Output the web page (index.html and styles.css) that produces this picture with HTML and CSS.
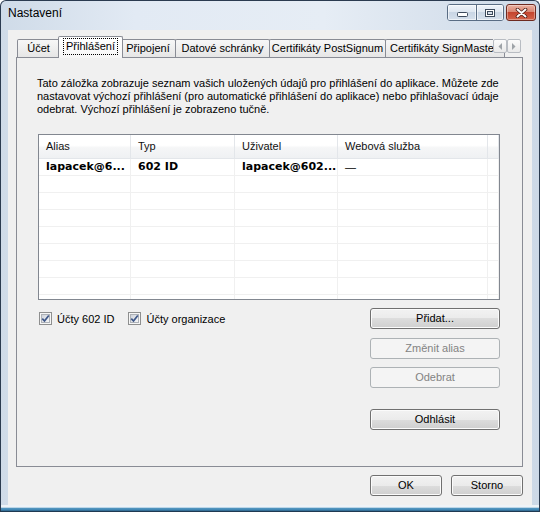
FILE: index.html
```html
<!DOCTYPE html>
<html lang="cs">
<head>
<meta charset="utf-8">
<title>Nastavení</title>
<link rel="stylesheet" href="styles.css">
</head>
<body>
<div class="window">
  <div class="titlebar">
    <span class="title">Nastavení</span>
    <div class="caps">
      <div class="cap-group">
        <div class="cap cap-min">
          <svg width="11" height="5" viewBox="0 0 11 5"><rect x="0.5" y="0.5" width="10" height="4" rx="1" fill="#fff" stroke="#3c4a5c"/></svg>
        </div>
        <div class="cap cap-max">
          <svg width="10" height="8" viewBox="0 0 10 8"><rect x="0.5" y="0.5" width="9" height="7" fill="#fff" stroke="#3c4a5c"/><rect x="2.5" y="2.5" width="5" height="3" fill="#d4dde8" stroke="#3c4a5c"/></svg>
        </div>
      </div>
      <div class="cap-close">
        <svg width="13" height="10" viewBox="0 0 13 10"><path d="M2.5 1.5 L10.5 8.5 M10.5 1.5 L2.5 8.5" stroke="#4a1a12" stroke-width="3.6" stroke-linecap="round"/><path d="M2.5 1.5 L10.5 8.5 M10.5 1.5 L2.5 8.5" stroke="#fff" stroke-width="2" stroke-linecap="round"/></svg>
      </div>
    </div>
  </div>

  <div class="client">
    <div class="tabs">
      <div class="tab t-ucet">Účet</div>
      <div class="tab t-prihl selected"><span class="focus">Přihlášení</span></div>
      <div class="tab t-pripo">Připojení</div>
      <div class="tab t-dat">Datové schránky</div>
      <div class="tab t-post">Certifikáty PostSignum</div>
      <div class="tab t-sign">Certifikáty SignMaster</div>
      <div class="tab-scroll">
        <div class="ts-btn"><svg width="4" height="7" viewBox="0 0 4 7"><path d="M4 0 L0.5 3.5 L4 7 Z" fill="#9ea3a8"/></svg></div>
        <div class="ts-btn"><svg width="4" height="7" viewBox="0 0 4 7"><path d="M0 0 L3.5 3.5 L0 7 Z" fill="#9ea3a8"/></svg></div>
      </div>
    </div>

    <div class="panel">
      <p class="desc">Tato záložka zobrazuje seznam vašich uložených údajů pro přihlášení do aplikace. Můžete zde<br>nastavovat výchozí přihlášení (pro automatické přihlášení do aplikace) nebo přihlašovací údaje<br>odebrat. Výchozí přihlášení je zobrazeno tučně.</p>

      <div class="list">
        <div class="lv-head">
          <div class="hc">Alias</div>
          <div class="hc">Typ</div>
          <div class="hc">Uživatel</div>
          <div class="hc">Webová služba</div>
          <div class="hc"></div>
        </div>
        <div class="lv-body">
          <div class="row bold"><div class="c">lapacek@6...</div><div class="c">602 ID</div><div class="c">lapacek@602...</div><div class="c dash">—</div><div class="c"></div></div>
          <div class="row"><div class="c"></div><div class="c"></div><div class="c"></div><div class="c"></div><div class="c"></div></div>
          <div class="row"><div class="c"></div><div class="c"></div><div class="c"></div><div class="c"></div><div class="c"></div></div>
          <div class="row"><div class="c"></div><div class="c"></div><div class="c"></div><div class="c"></div><div class="c"></div></div>
          <div class="row"><div class="c"></div><div class="c"></div><div class="c"></div><div class="c"></div><div class="c"></div></div>
          <div class="row"><div class="c"></div><div class="c"></div><div class="c"></div><div class="c"></div><div class="c"></div></div>
          <div class="row"><div class="c"></div><div class="c"></div><div class="c"></div><div class="c"></div><div class="c"></div></div>
          <div class="row"><div class="c"></div><div class="c"></div><div class="c"></div><div class="c"></div><div class="c"></div></div>
          <div class="row"><div class="c"></div><div class="c"></div><div class="c"></div><div class="c"></div><div class="c"></div></div>
        </div>
      </div>

      <div class="lower">
        <div class="checks">
          <label class="check">
            <span class="cb"><span class="cb-in"></span><svg class="tick" width="9" height="9" viewBox="0 0 9 9"><path d="M1.3 4.6 L3.5 7 L7.8 1.4" fill="none" stroke="#3d5688" stroke-width="1.7"/></svg></span>
            <span>Účty 602 ID</span>
          </label>
          <label class="check">
            <span class="cb"><span class="cb-in"></span><svg class="tick" width="9" height="9" viewBox="0 0 9 9"><path d="M1.3 4.6 L3.5 7 L7.8 1.4" fill="none" stroke="#3d5688" stroke-width="1.7"/></svg></span>
            <span>Účty organizace</span>
          </label>
        </div>
        <div class="btn-col">
          <button class="btn">Přidat...</button>
          <button class="btn b-alias" disabled>Změnit alias</button>
          <button class="btn b-odebrat" disabled>Odebrat</button>
          <button class="btn b-odhlasit">Odhlásit</button>
        </div>
      </div>
    </div>

    <div class="dlg-buttons">
      <button class="btn sm">OK</button>
      <button class="btn sm">Storno</button>
    </div>
  </div>
  <div class="bottom-edge"></div>
</div>
</body>
</html>
```

FILE: styles.css
```css
* { box-sizing: border-box; }

html, body {
  margin: 0;
  padding: 0;
}

body {
  width: 540px;
  height: 512px;
  overflow: hidden;
  font-family: "Liberation Sans", Arial, sans-serif;
  font-size: 11px;
  color: #000;
  background: #fff;
}

.window {
  width: 540px;
  height: 512px;
  display: flex;
  flex-direction: column;
  border: 1px solid #2b3b50;
  border-bottom-color: #1f3a52;
  border-radius: 6px 6px 0 0;
  background: linear-gradient(to right, #cfdbe8 0%, #e2eaf4 25%, #e6edf5 60%, #cdd9e7 100%);
  padding: 0 7px 0 7px;
}

.titlebar {
  height: 29px;
  display: flex;
  align-items: flex-start;
  flex: none;
}

.title {
  padding-top: 5px;
  font-size: 12px;
  line-height: 14px;
  color: #000;
}

.caps {
  margin-left: auto;
  margin-top: 3px;
  margin-right: -4px;
  display: flex;
  gap: 2px;
}

.cap-group {
  display: flex;
  height: 17px;
  border: 1px solid #5a6d84;
  border-radius: 3px;
  overflow: hidden;
}

.cap {
  width: 28px;
  height: 15px;
  display: flex;
  align-items: center;
  justify-content: center;
  background: linear-gradient(#eef3f9 0%, #dfe7f1 45%, #c9d6e5 50%, #d6e0ec 100%);
  box-shadow: inset 0 0 0 1px rgba(255,255,255,0.6);
}

.cap + .cap {
  width: 27px;
  border-left: 1px solid #5a6d84;
}

.cap-min {
  align-items: flex-end;
  padding-bottom: 3px;
}

.cap-close {
  width: 30px;
  height: 17px;
  border: 1px solid #6e2a20;
  border-radius: 3px;
  display: flex;
  align-items: center;
  justify-content: center;
  background: linear-gradient(#eab1a2 0%, #d98672 45%, #c4452e 50%, #d4634a 100%);
  box-shadow: inset 0 0 0 1px rgba(255,255,255,0.35);
}

.client {
  flex: 1;
  background: #f0f0f0;
  display: flex;
  flex-direction: column;
  padding: 6px 9px 9px 8px;
}

.bottom-edge {
  flex: none;
  height: 6px;
  margin: 0 -7px;
  background: linear-gradient(#eef3f8 0%, #eef3f8 40%, #5b9cc4 45%, #3f86b4 80%, #2e5f84 100%);
}

/* Tabs */
.tabs {
  position: relative;
  z-index: 1;
  display: flex;
  align-items: flex-end;
  height: 22px;
  padding-left: 1px;
  margin-bottom: -1px;
  flex: none;
}

.tab {
  flex: none;
  height: 18px;
  margin-bottom: 1px;
  margin-left: -1px;
  border: 1px solid #898c95;
  border-bottom: none;
  border-radius: 2px 2px 0 0;
  background: linear-gradient(#f7f7f7, #e6e6e6);
  text-align: center;
  line-height: 16px;
  white-space: nowrap;
  overflow: hidden;
}

.t-ucet { width: 43px; margin-left: 0; }
.t-prihl { width: 65px; }
.t-pripo { width: 56px; }
.t-dat { width: 95px; }
.t-post { width: 117px; }
.t-sign { width: 120px; text-align: left; padding-left: 4px; }

.tab.selected {
  position: relative;
  z-index: 2;
  height: 22px;
  margin: 0 -2px;
  background: linear-gradient(#ffffff, #f6f6f6);
  padding-top: 1px;
  line-height: 15px;
}

.focus {
  display: inline-block;
  border: 1px dotted #000;
  padding: 0 2px;
  line-height: 15px;
}

.tab-scroll {
  position: absolute;
  right: 2px;
  top: 3px;
  display: flex;
  background: #f0f0f0;
}

.ts-btn {
  width: 14px;
  height: 14px;
  border: 1px solid #b8bcc2;
  border-radius: 2px;
  background: linear-gradient(#fbfbfb, #e9e9e9);
  display: flex;
  align-items: center;
  justify-content: center;
}

/* Panel */
.panel {
  flex: 1;
  border: 1px solid #898c95;
  background: #f0f0f0;
  padding: 19px 22px 0 20px;
  display: flex;
  flex-direction: column;
}

.desc {
  margin: 0;
  line-height: 13px;
  white-space: nowrap;
}

.list {
  margin: 18px 0 0 1px;
  height: 166px;
  border: 1px solid #828790;
  background: #fff;
  overflow: hidden;
  flex: none;
}

.lv-head,
.row {
  display: grid;
  grid-template-columns: 92px 104px 103px 150px 11px;
}

.lv-head {
  height: 24px;
  background: linear-gradient(#ffffff 0%, #ffffff 45%, #f5f6f7 55%, #eff1f3 100%);
  border-bottom: 1px solid #e3e6ea;
}

.hc {
  padding-left: 7px;
  line-height: 23px;
  border-right: 1px solid #e3e6ea;
  white-space: nowrap;
  overflow: hidden;
  color: #111;
}

.lv-body {
  height: 140px;
  overflow: hidden;
}

.row {
  height: 17px;
}

.c {
  padding-left: 7px;
  line-height: 16px;
  border-right: 1px solid #f0f0f0;
  border-bottom: 1px solid #f0f0f0;
  white-space: nowrap;
  overflow: hidden;
}

.row.bold .c {
  font-family: "DejaVu Sans", Verdana, sans-serif;
  font-weight: bold;
  font-size: 11px;
}

.row.bold .dash {
  font-family: "Liberation Sans", Arial, sans-serif;
  font-weight: normal;
}

/* lower area */
.lower {
  display: flex;
  justify-content: space-between;
  align-items: flex-start;
  margin-top: 8px;
}

.checks {
  display: flex;
  align-items: center;
  height: 21px;
  margin-left: 2px;
}

.check {
  display: flex;
  align-items: center;
  gap: 5px;
}

.check + .check {
  margin-left: 14px;
}

.cb {
  position: relative;
  width: 13px;
  height: 13px;
  border: 1px solid #8e8f8f;
  background: #f6f6f6;
  padding: 1px;
  flex: none;
}

.cb-in {
  display: block;
  width: 9px;
  height: 9px;
  border: 1px solid #aeb2b8;
  background: linear-gradient(135deg, #cfd3da, #f6f7f8);
}

.tick {
  position: absolute;
  left: 1px;
  top: 1px;
}

.btn-col {
  width: 130px;
  display: flex;
  flex-direction: column;
}

.btn {
  width: 130px;
  height: 21px;
  padding: 0;
  border: 1px solid #707070;
  border-radius: 3px;
  background: linear-gradient(#f2f2f2 0%, #ebebeb 50%, #dddddd 50%, #cfcfcf 100%);
  box-shadow: inset 0 0 0 1px #fbfbfb;
  font-family: "Liberation Sans", Arial, sans-serif;
  font-size: 11px;
  font-weight: 400;
  color: #000;
  line-height: 19px;
  text-align: center;
}

.btn:disabled {
  border-color: #adb2b5;
  background: #f4f4f4;
  box-shadow: none;
  color: #838383;
}

.b-alias { margin-top: 9px; }
.b-odebrat { margin-top: 8px; }
.b-odhlasit { margin-top: 21px; }

.dlg-buttons {
  display: flex;
  justify-content: flex-end;
  gap: 9px;
  margin-top: 8px;
  flex: none;
}

.btn.sm {
  width: 72px;
}
```
